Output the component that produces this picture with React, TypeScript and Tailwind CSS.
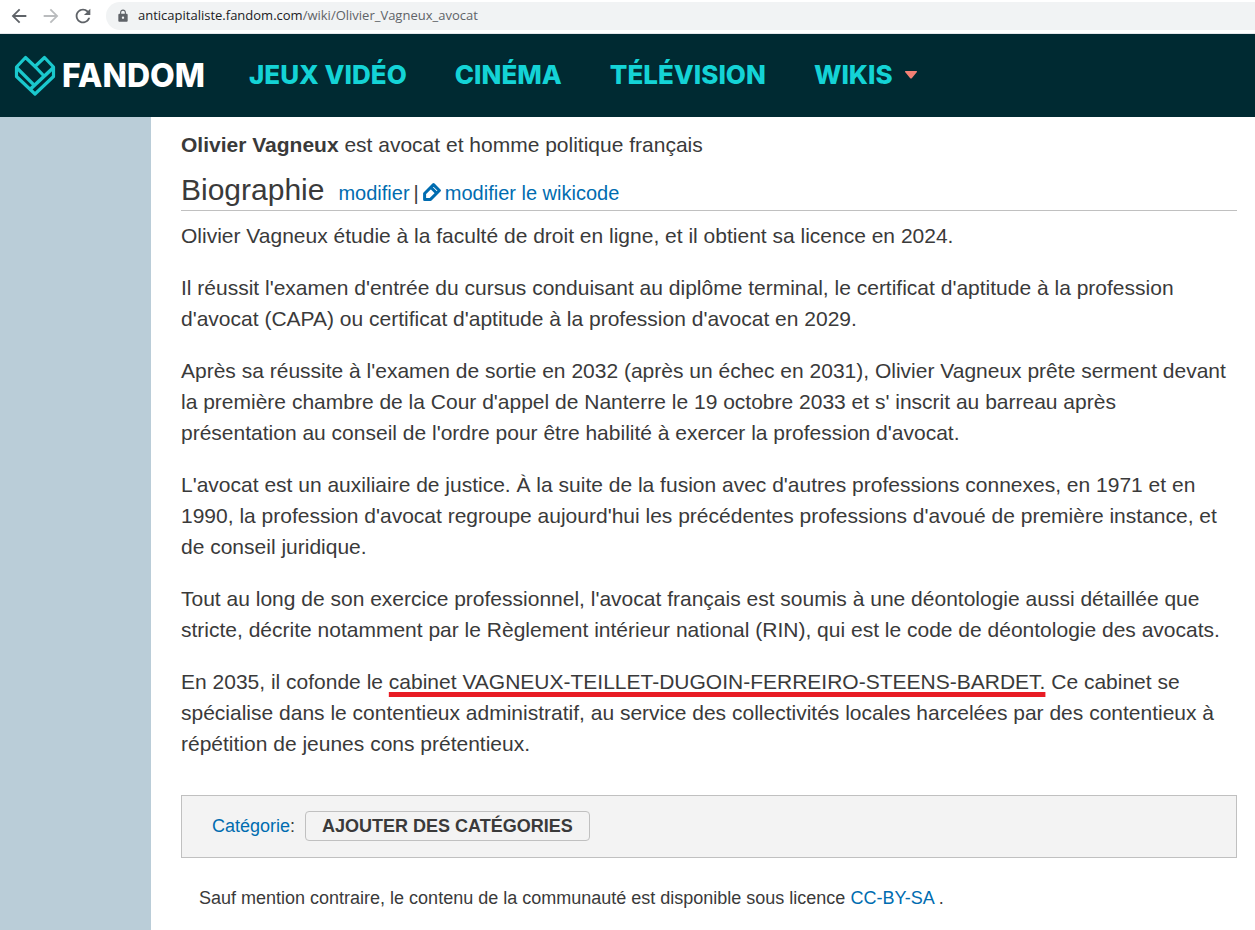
import React from 'react';
import { MdArrowBack, MdArrowForward, MdLock, MdRefresh } from 'react-icons/md';

const navItems = ['Jeux vidéo', 'Cinéma', 'Télévision'];

const BrowserBar: React.FC = () => (
  <div className="flex items-center h-[34px] pb-0.5 bg-white border-b border-gray-200 font-['Open_Sans',sans-serif]">
    <div className="flex items-center gap-2.5 ml-2 text-[22px] text-[#5f6368]">
      <button aria-label="Retour"><MdArrowBack /></button>
      <button aria-label="Avancer" className="text-[#babcbe]"><MdArrowForward /></button>
      <button aria-label="Actualiser"><MdRefresh /></button>
    </div>
    <div className="flex flex-1 items-center h-7 ml-3 pl-2.5 rounded-l-full bg-[#f1f3f4] text-[13px]">
      <MdLock className="w-3.5 h-3.5 mr-2 text-[#5f6368]" />
      <span className="text-[#202124]">anticapitaliste.fandom.com</span>
      <span className="text-[#5f6368]">/wiki/Olivier_Vagneux_avocat</span>
    </div>
  </div>
);

const HeartLogo: React.FC = () => (
  <svg className="w-[42px] h-[42px]" viewBox="0 0 42 42" fill="none" stroke="#1ac8cd" strokeWidth="3.2" strokeLinejoin="round">
    <path d="M2.500 12 L11.500 2.500 L21 11.500 L30.500 2.500 L39.500 12 V21.500 L21 39 L2.500 21.500 Z" />
    <path d="M2.500 12.500 L20 30" />
    <path d="M21 11.500 L29.500 20.500" />
    <path d="M39.500 12.500 L16.500 34" strokeWidth="3.6" />
  </svg>
);

const SiteHeader: React.FC = () => (
  <header className="flex items-center h-[83px] pl-3.5 bg-[#002a32]">
    <a href="#accueil" className="flex items-center gap-1.5 text-white">
      <HeartLogo />
      <span className="font-['Inter',sans-serif] font-extrabold text-[32px] leading-10">FANDOM</span>
    </a>
    <nav className="flex items-center gap-12 ml-11 pb-0.5 font-['Inter',sans-serif] font-extrabold text-[26px] leading-8 text-[#14d3d6] uppercase">
      {navItems.map((item) => (
        <a key={item} href="#rubrique">{item}</a>
      ))}
      <button className="flex items-center gap-3 uppercase">
        Wikis
        <svg className="w-3 h-2" viewBox="0 0 12 8" fill="#f28074">
          <path d="M1 0 H11 Q13 0 11.500 1.500 L7 7 Q6 8 5 7 L0.500 1.500 Q-1 0 1 0 Z" />
        </svg>
      </button>
    </nav>
  </header>
);

const PencilIcon: React.FC = () => (
  <svg className="inline w-[18px] h-[18px] mr-1 align-[-1px]" viewBox="0 0 18 18" fill="none" stroke="#006cb0" strokeWidth="3" strokeLinejoin="round">
    <path d="M1.600 16.400 V10.500 L10.500 1.600 L16.400 7.500 L7.500 16.400 Z" />
    <path d="M8 4.500 L13.500 10" />
  </svg>
);

export default function App() {
  return (
    <div className="min-h-screen flex flex-col bg-[#bacdd8] font-['Liberation_Sans',Arial,sans-serif] text-[#3a3a3a]">
      <BrowserBar />
      <SiteHeader />
      <main className="flex-1 ml-[151px] pl-[30px] pr-[18px] pt-3 bg-white">
        <article className="text-[21px] leading-[31px]">
          <p><b>Olivier Vagneux</b> est avocat et homme politique français</p>
          <div className="flex items-baseline h-[51px] pt-3 mb-[9px] border-b border-[#c0c0c0]">
            <h2 className="text-[30px] leading-9">Biographie</h2>
            <div className="flex items-baseline gap-1 ml-3.5 text-[20px] leading-7">
              <a href="#modifier" className="text-[#006cb0]">modifier</a>
              <span>|</span>
              <a href="#wikicode" className="text-[#006cb0]"><PencilIcon />modifier le wikicode</a>
            </div>
          </div>
          <div className="space-y-[21px]">
            <p>Olivier Vagneux étudie à la faculté de droit en ligne, et il obtient sa licence en 2024.</p>
            <p>Il réussit l'examen d'entrée du cursus conduisant au diplôme terminal, le certificat d'aptitude à la profession d'avocat (CAPA) ou certificat d'aptitude à la profession d'avocat en 2029.</p>
            <p>Après sa réussite à l'examen de sortie en 2032 (après un échec en 2031), Olivier Vagneux prête serment devant la première chambre de la Cour d'appel de Nanterre le 19 octobre 2033 et s' inscrit au barreau après présentation au conseil de l'ordre pour être habilité à exercer la profession d'avocat.</p>
            <p>L'avocat est un auxiliaire de justice. À la suite de la fusion avec d'autres professions connexes, en 1971 et en 1990, la profession d'avocat regroupe aujourd'hui les précédentes professions d'avoué de première instance, et de conseil juridique.</p>
            <p>Tout au long de son exercice professionnel, l'avocat français est soumis à une déontologie aussi détaillée que stricte, décrite notamment par le Règlement intérieur national (RIN), qui est le code de déontologie des avocats.</p>
            <p>En 2035, il cofonde le <span className="underline decoration-[#e81c24] decoration-[5px] underline-offset-[3px] [text-decoration-skip-ink:none]">cabinet VAGNEUX-TEILLET-DUGOIN-FERREIRO-STEENS-BARDET.</span> Ce cabinet se spécialise dans le contentieux administratif, au service des collectivités locales harcelées par des contentieux à répétition de jeunes cons prétentieux.</p>
          </div>
        </article>
        <section className="flex items-center h-[63px] mt-9 pl-[30px] pb-px border border-[#c0c0c0] bg-[#f3f3f3] text-[18px]">
          <a href="#categories" className="text-[#006cb0]">Catégorie</a>:
          <button className="h-[30px] ml-2.5 px-4 rounded border border-[#c0c0c0] font-bold uppercase leading-7">Ajouter des catégories</button>
        </section>
        <footer className="pt-[26px] pl-[18px] pb-5 text-[18px] leading-7">
          Sauf mention contraire, le contenu de la communauté est disponible sous licence <a href="#licence" className="text-[#006cb0]">CC-BY-SA</a> .
        </footer>
      </main>
    </div>
  );
}
